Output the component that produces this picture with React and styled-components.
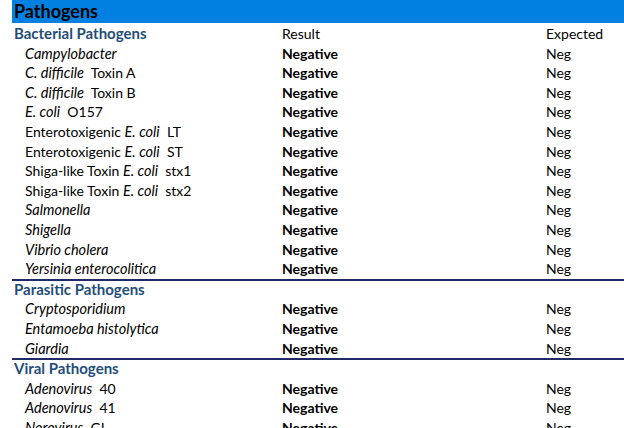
import React from "react";
import styled, { createGlobalStyle } from "styled-components";

const GlobalStyle = createGlobalStyle`
  body {
    margin: 0;
    background: #ffffff;
    font-family: Lato, "Open Sans", sans-serif;
    color: #000;
  }
`;

const sections = [
  {
    title: "Bacterial Pathogens",
    header: true,
    items: [
      [<i>Campylobacter</i>],
      [<><i>C. difficile</i>&nbsp; Toxin A</>],
      [<><i>C. difficile</i>&nbsp; Toxin B</>],
      [<><i>E. coli</i>&nbsp; O157</>],
      [<>Enterotoxigenic <i>E. coli</i>&nbsp; LT</>],
      [<>Enterotoxigenic <i>E. coli</i>&nbsp; ST</>],
      [<>Shiga-like Toxin <i>E. coli</i>&nbsp; stx1</>],
      [<>Shiga-like Toxin <i>E. coli</i>&nbsp; stx2</>],
      [<i>Salmonella</i>],
      [<i>Shigella</i>],
      [<i>Vibrio cholera</i>],
      [<i>Yersinia enterocolitica</i>],
    ],
  },
  {
    title: "Parasitic Pathogens",
    items: [
      [<i>Cryptosporidium</i>],
      [<i>Entamoeba histolytica</i>],
      [<i>Giardia</i>],
    ],
  },
  {
    title: "Viral Pathogens",
    items: [
      [<><i>Adenovirus</i>&nbsp; 40</>],
      [<><i>Adenovirus</i>&nbsp; 41</>],
      [<><i>Norovirus</i>&nbsp; GI</>],
    ],
  },
];

const App = () => {
  return (
    <Wrapper>
      <GlobalStyle />
      <Banner>Pathogens</Banner>
      {sections.map((section, i) => (
        <Section key={section.title} $divider={i < sections.length - 1}>
          <Row>
            <SectionTitle>{section.title}</SectionTitle>
            <Plain>{section.header ? "Result" : ""}</Plain>
            <Plain>{section.header ? "Expected" : ""}</Plain>
          </Row>
          {section.items.map((item, j) => (
            <Row key={j}>
              <Label>{item[0]}</Label>
              <Result>Negative</Result>
              <Plain>Neg</Plain>
            </Row>
          ))}
        </Section>
      ))}
    </Wrapper>
  );
};

export default App;

const Wrapper = styled.div`
  width: 624px;
  height: 428px;
  overflow: hidden;
  padding-left: 12px;
  box-sizing: border-box;
`;

const Banner = styled.div`
  height: 23px;
  line-height: 23px;
  background: #0080e0;
  padding-left: 2px;
  font-size: 18px;
  font-weight: 700;
  margin-bottom: 1px;
`;

const Section = styled.div`
  border-bottom: ${(p) => (p.$divider ? "2px solid #1f2a66" : "none")};
  margin-bottom: ${(p) => (p.$divider ? "-1px" : "0")};
`;

const Row = styled.div`
  display: grid;
  grid-template-columns: 270px 264px 1fr;
  height: 19.6px;
  line-height: 19.6px;
  font-size: 14px;
  white-space: nowrap;
`;

const SectionTitle = styled.div`
  padding-left: 2px;
  font-weight: 700;
  font-size: 15px;
  color: #1f4e79;
`;

const Label = styled.div`
  padding-left: 13px;

  i {
    font-size: 14.5px;
  }
`;

const Result = styled.div`
  font-weight: 700;
`;

const Plain = styled.div``;
